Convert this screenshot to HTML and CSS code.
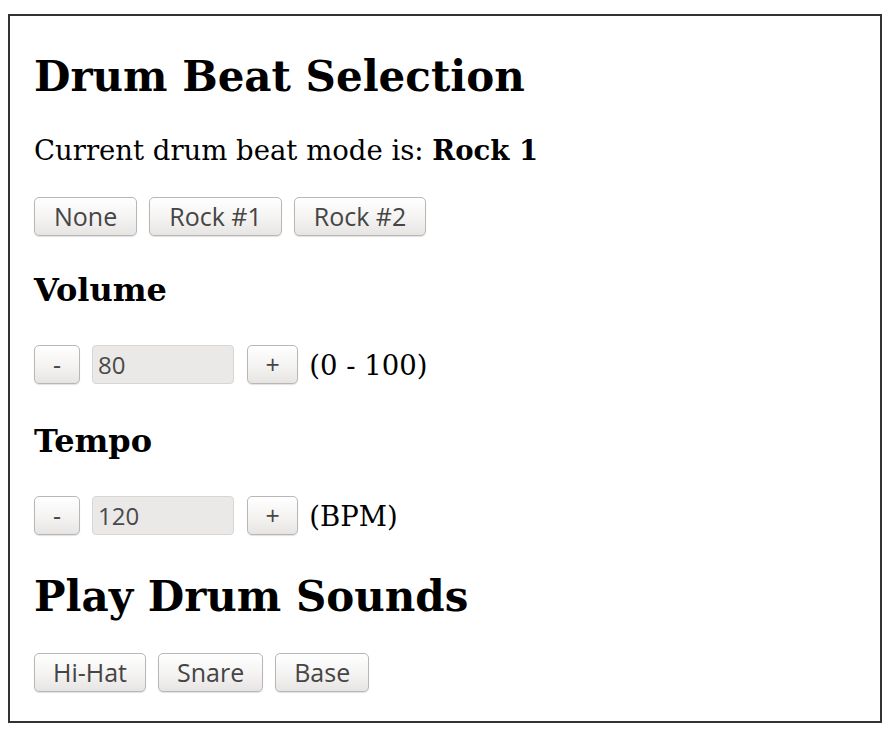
FILE: index.html
```html
<!DOCTYPE html>
<html>
<head>
<meta charset="utf-8">
<link rel="stylesheet" href="styles.css">
</head>
<body>
<div class="panel">
  <h1 class="title">Drum Beat Selection</h1>
  <p class="mode">Current drum beat mode is: <b>Rock 1</b></p>
  <div class="btn-row">
    <button class="btn">None</button>
    <button class="btn">Rock #1</button>
    <button class="btn">Rock #2</button>
  </div>
  <h3 class="sub">Volume</h3>
  <div class="ctrl-row">
    <button class="btn minus">-</button>
    <input class="field" type="text" value="80" disabled>
    <button class="btn plus">+</button>
    <span class="hint">(0 - 100)</span>
  </div>
  <h3 class="sub tempo">Tempo</h3>
  <div class="ctrl-row">
    <button class="btn minus">-</button>
    <input class="field" type="text" value="120" disabled>
    <button class="btn plus">+</button>
    <span class="hint">(BPM)</span>
  </div>
  <h2 class="title second">Play Drum Sounds</h2>
  <div class="btn-row compact">
    <button class="btn">Hi-Hat</button>
    <button class="btn">Snare</button>
    <button class="btn">Base</button>
  </div>
</div>
</body>
</html>
```
FILE: styles.css
```css
html, body {
  margin: 0;
  padding: 0;
  background: #ffffff;
}
body {
  padding: 14px 10px 11px 8px;
  font-family: "DejaVu Serif", serif;
  color: #000;
}
.panel {
  border: 2px solid #333;
  padding: 36px 24px 29px 24px;
  display: flex;
  flex-direction: column;
  align-items: flex-start;
}
.title {
  margin: 0;
  font-size: 42px;
  line-height: 50px;
  font-weight: bold;
}
.second {
  margin-top: 37px;
}
.mode {
  margin: 32px 0 0 0;
  font-size: 27.5px;
  line-height: 32px;
}
.btn-row {
  display: flex;
  gap: 12px;
  margin-top: 31px;
}
.btn {
  font-family: "Open Sans", "DejaVu Sans", sans-serif;
  font-size: 25px;
  line-height: 1;
  color: #454545;
  height: 39px;
  padding: 0 19px;
  border: 1px solid #b8b7b5;
  border-radius: 5px;
  background: linear-gradient(#ffffff, #f4f3f2 55%, #e6e5e3);
  box-shadow: 0 1px 1px rgba(0,0,0,0.12);
}
.compact .btn {
  padding: 0 18px;
}
.btn.minus {
  padding: 0 18px;
}
.btn.plus {
  padding: 0 17.5px;
  margin-left: 1px;
}
.sub {
  margin: 35px 0 0 0;
  font-size: 32px;
  line-height: 38px;
  font-weight: bold;
}
.sub.tempo {
  margin-top: 38px;
}
.ctrl-row {
  display: flex;
  align-items: center;
  gap: 12px;
  margin-top: 36px;
}
.field {
  width: 142px;
  height: 39px;
  box-sizing: border-box;
  padding: 0 5px;
  margin: 0;
  border: 1px solid #d8d6d4;
  border-radius: 4px;
  background: #ebe9e7;
  color: #4a4a4a;
  -webkit-text-fill-color: #4a4a4a;
  opacity: 1;
  font-family: "Open Sans", "DejaVu Sans", sans-serif;
  font-size: 24px;
}
.hint {
  font-size: 27.5px;
  margin-left: -1px;
}
```
